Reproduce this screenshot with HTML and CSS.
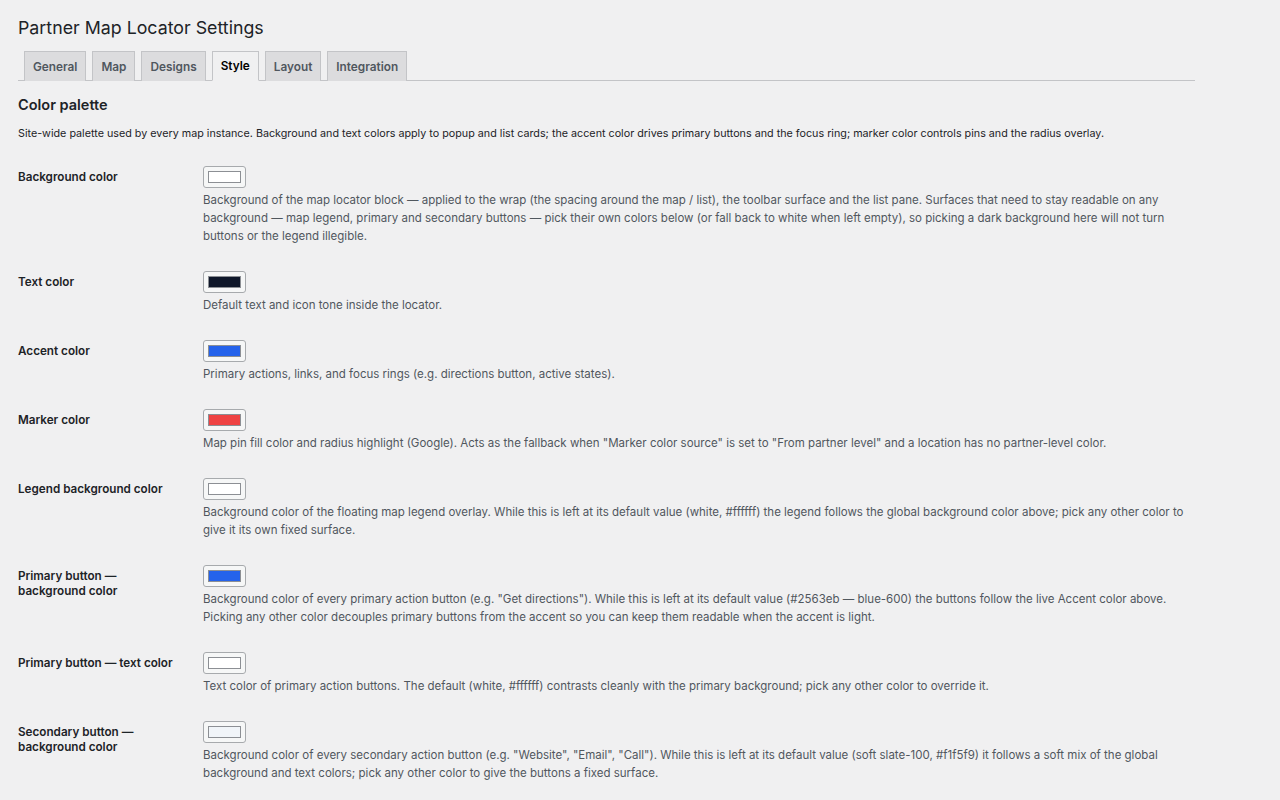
FILE: index.html
```html
<!DOCTYPE html>
<html lang="en">
<head>
<meta charset="utf-8">
<title>Partner Map Locator Settings</title>
<link rel="stylesheet" href="styles.css">
</head>
<body>
<div class="wrap">
  <h1 class="page-title">Partner Map Locator Settings</h1>
  <nav class="tabs">
    <a class="tab">General</a>
    <a class="tab">Map</a>
    <a class="tab">Designs</a>
    <a class="tab tab-active">Style</a>
    <a class="tab">Layout</a>
    <a class="tab">Integration</a>
  </nav>
  <h2 class="section-title">Color palette</h2>
  <p class="section-desc">Site-wide palette used by every map instance. Background and text colors apply to popup and list cards; the accent color drives primary buttons and the focus ring; marker color controls pins and the radius overlay.</p>

  <div class="form">
    <div class="row">
      <div class="label">Background color</div>
      <div class="field">
        <span class="swatch"><span class="swatch-fill" style="background:#ffffff"></span></span>
        <p class="desc">Background of the map locator block — applied to the wrap (the spacing around the map / list), the toolbar surface and the list pane. Surfaces that need to stay readable on any background — map legend, primary and secondary buttons — pick their own colors below (or fall back to white when left empty), so picking a dark background here will not turn buttons or the legend illegible.</p>
      </div>
    </div>
    <div class="row">
      <div class="label">Text color</div>
      <div class="field">
        <span class="swatch"><span class="swatch-fill" style="background:#0f172a"></span></span>
        <p class="desc">Default text and icon tone inside the locator.</p>
      </div>
    </div>
    <div class="row">
      <div class="label">Accent color</div>
      <div class="field">
        <span class="swatch"><span class="swatch-fill" style="background:#2563eb"></span></span>
        <p class="desc">Primary actions, links, and focus rings (e.g. directions button, active states).</p>
      </div>
    </div>
    <div class="row">
      <div class="label">Marker color</div>
      <div class="field">
        <span class="swatch"><span class="swatch-fill" style="background:#ef4444"></span></span>
        <p class="desc">Map pin fill color and radius highlight (Google). Acts as the fallback when "Marker color source" is set to "From partner level" and a location has no partner-level color.</p>
      </div>
    </div>
    <div class="row">
      <div class="label">Legend background color</div>
      <div class="field">
        <span class="swatch"><span class="swatch-fill" style="background:#ffffff"></span></span>
        <p class="desc">Background color of the floating map legend overlay. While this is left at its default value (white, #ffffff) the legend follows the global background color above; pick any other color to give it its own fixed surface.</p>
      </div>
    </div>
    <div class="row">
      <div class="label">Primary button — background color</div>
      <div class="field">
        <span class="swatch"><span class="swatch-fill" style="background:#2563eb"></span></span>
        <p class="desc">Background color of every primary action button (e.g. "Get directions"). While this is left at its default value (#2563eb — blue-600) the buttons follow the live Accent color above. Picking any other color decouples primary buttons from the accent so you can keep them readable when the accent is light.</p>
      </div>
    </div>
    <div class="row">
      <div class="label">Primary button — text color</div>
      <div class="field">
        <span class="swatch"><span class="swatch-fill" style="background:#ffffff"></span></span>
        <p class="desc">Text color of primary action buttons. The default (white, #ffffff) contrasts cleanly with the primary background; pick any other color to override it.</p>
      </div>
    </div>
    <div class="row">
      <div class="label">Secondary button — background color</div>
      <div class="field">
        <span class="swatch"><span class="swatch-fill" style="background:#f1f5f9"></span></span>
        <p class="desc">Background color of every secondary action button (e.g. "Website", "Email", "Call"). While this is left at its default value (soft slate-100, #f1f5f9) it follows a soft mix of the global background and text colors; pick any other color to give the buttons a fixed surface.</p>
      </div>
    </div>
  </div>
</div>
</body>
</html>
```

FILE: styles.css
```css
html, body {
  margin: 0;
  padding: 0;
  background: #f0f0f1;
  color: #1d2327;
  font-family: Inter, "Liberation Sans", sans-serif;
}

.wrap {
  width: 1177px;
  margin-left: 18px;
  padding-top: 15px;
}

.page-title {
  margin: 0;
  font-size: 17.8px;
  font-weight: 400;
  line-height: 26px;
  color: #1d2327;
}

.tabs {
  display: flex;
  gap: 6px;
  padding-left: 6px;
  margin-top: 10px;
  border-bottom: 1px solid #c3c4c7;
  height: 29px;
  align-items: flex-end;
}

.tab {
  box-sizing: border-box;
  height: 30px;
  margin-bottom: -1px;
  padding: 0 8px;
  display: flex;
  align-items: center;
  font-size: 11.8px;
  font-weight: 600;
  color: #50575e;
  background: #dcdcde;
  border: 1px solid #c3c4c7;
  border-bottom: none;
}

.tab-active {
  background: #f0f0f1;
  color: #000;
  border-bottom: 1px solid #f0f0f1;
}

.section-title {
  margin: 14px 0 0;
  font-size: 14.5px;
  font-weight: 600;
  line-height: 20px;
}

.section-desc {
  margin: 11px 0 0;
  font-size: 10.75px;
  line-height: 16px;
  color: #1d2327;
}

.form {
  margin-top: 11px;
}

.row {
  display: grid;
  grid-template-columns: 185px 1fr;
  padding: 13px 0;
}

.label {
  padding-top: 3.5px;
  padding-right: 20px;
  font-size: 11.7px;
  font-weight: 600;
  line-height: 15px;
  color: #1d2327;
}

.field {
  display: flex;
  flex-direction: column;
  align-items: flex-start;
}

.swatch {
  box-sizing: border-box;
  width: 43px;
  height: 22px;
  padding: 4px;
  background: #f6f7f7;
  border: 1px solid #a7aaad;
  border-radius: 3px;
  display: flex;
}

.swatch-fill {
  flex: 1;
  border: 1px solid #8c8f94;
}

.desc {
  margin: 3px 0 0;
  font-size: 11.5px;
  line-height: 18px;
  color: #50575e;
}
```
